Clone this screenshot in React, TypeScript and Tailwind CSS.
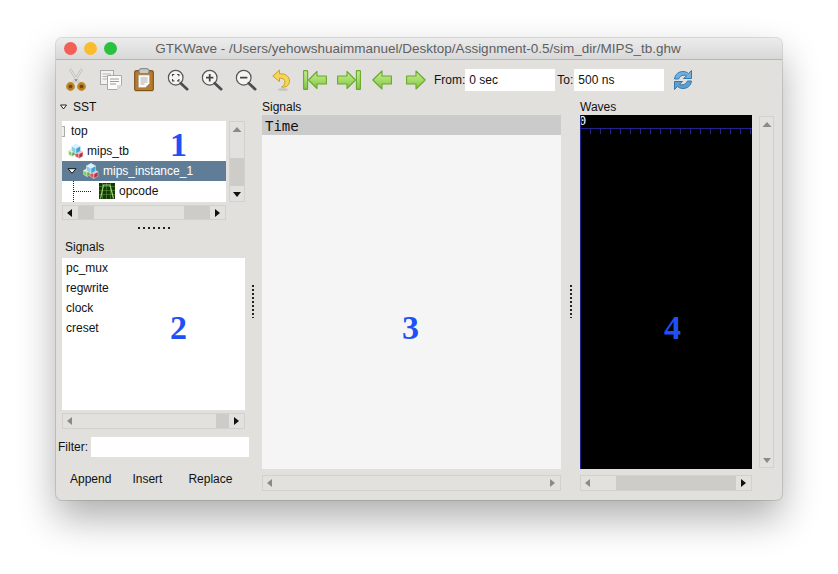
import type { ReactNode } from "react";

const FONT = "font-['Liberation_Sans',Arial,sans-serif]";
const DIGIT = "absolute font-['Liberation_Serif',serif] text-[34px] font-bold leading-[40px] text-[#1f50f5]";

function Arrow({ dir, dim }: { dir: "l" | "r" | "u" | "d"; dim?: boolean }) {
  const points = {
    l: "6,1 6,9 1,5",
    r: "2,1 2,9 7,5",
    u: "0.5,7 9.5,7 5,2",
    d: "1,3 9,3 5,8",
  }[dir];
  return (
    <svg width="10" height="10" viewBox="0 0 10 10">
      <polygon points={points} fill={dim ? "#8a8a88" : "#111"} />
    </svg>
  );
}

function ArrowCell({ dir, dim }: { dir: "l" | "r" | "u" | "d"; dim?: boolean }) {
  const horizontal = dir === "l" || dir === "r";
  return (
    <div className={`flex shrink-0 items-center justify-center ${horizontal ? "h-full w-[15px]" : "h-[15px] w-full"}`}>
      <Arrow dir={dir} dim={dim} />
    </div>
  );
}

function ScrollBar({ vertical, className, children }: { vertical?: boolean; className: string; children: ReactNode }) {
  return (
    <div className={`flex overflow-hidden border border-[#d2d1cd] bg-[#e2e1dd] ${vertical ? "flex-col" : ""} ${className}`}>
      {children}
    </div>
  );
}

function Gutter() {
  return <div className="flex-1 bg-[#cdccc8]" />;
}

function Cube({ x, y, r, top, left, right }: { x: number; y: number; r: number; top: string; left: string; right: string }) {
  const w = r * 0.87;
  const h = r / 2;
  return (
    <g stroke="#fff" strokeWidth=".4">
      <path d={`M${x} ${y}L${x + w} ${y - h}L${x} ${y - r}L${x - w} ${y - h}Z`} fill={top} />
      <path d={`M${x} ${y}L${x - w} ${y - h}V${y + h}L${x} ${y + r}Z`} fill={left} />
      <path d={`M${x} ${y}L${x + w} ${y - h}V${y + h}L${x} ${y + r}Z`} fill={right} />
    </g>
  );
}

function Blocks() {
  return (
    <svg width="16" height="16" viewBox="0 0 16 16">
      <Cube x={4} y={9.5} r={4} top="#d5efc0" left="#8cc866" right="#5fa83f" />
      <Cube x={11} y={11} r={4.500} top="#f3b4b4" left="#e2505a" right="#b9303c" />
      <Cube x={8} y={5.500} r={5.200} top="#d8f1fb" left="#86cfee" right="#3fa3d4" />
    </svg>
  );
}

function TreeRows() {
  return (
    <div className="relative h-[81px] w-[164px] shrink-0 overflow-hidden bg-white text-[12px] text-[#111]">
      <div className="flex h-[20px] items-center pl-[9px]">top</div>
      <div className="absolute left-0 top-[5px] h-[11px] w-[3px] rounded-r-[1px] border border-l-0 border-[#aaa] bg-[#eee]" />
      <div className="flex h-[20px] items-center pl-[6px]">
        <Blocks />
        <span className="ml-[3px]">mips_tb</span>
      </div>
      <div className="flex h-[20px] items-center bg-[#5f7d96] pl-[5px] text-white">
        <svg width="10" height="6" viewBox="0 0 10 6">
          <polygon points="1,0.7 9,0.7 5,5.300" fill="#fff" stroke="#111" strokeWidth="1" />
        </svg>
        <div className="ml-[6px] flex"><Blocks /></div>
        <span className="ml-[4px]">mips_instance_1</span>
      </div>
      <div className="flex h-[20px] items-center pl-[37px]">
        <svg width="16" height="16" viewBox="0 0 16 16">
          <rect width="16" height="16" fill="#1b3510" />
          <path d="M0 3.500H16M0 7.500H16M0 11.500H16M3.500 0V16M7.500 0V16M11.500 0V16" stroke="#4a8a30" strokeWidth=".7" />
          <path d="M1.500 15.500 4.500 2 11 2 14.500 15.500" fill="none" stroke="#a5d67a" strokeWidth="1.100" />
        </svg>
        <span className="ml-[4px]">opcode</span>
      </div>
      <div className="absolute left-[11px] top-[60px] h-[21px] border-l border-dotted border-[#222]" />
      <div className="absolute left-[12px] top-[70px] w-[17px] border-t border-dotted border-[#222]" />
      <span className={`${DIGIT} left-[108px] top-[4px]`}>1</span>
    </div>
  );
}

function Magnifier({ children }: { children?: ReactNode }) {
  return (
    <svg width="22" height="22" viewBox="0 0 24 24">
      <circle cx="9.500" cy="9.500" r="8" fill="#f4f4f2" stroke="#555" strokeWidth="1.300" />
      <path d="M15 15.500 22 22" stroke="#4d4d4d" strokeWidth="3" strokeLinecap="round" />
      {children}
    </svg>
  );
}

function GreenDefs() {
  return (
    <svg width="0" height="0" className="absolute">
      <defs>
        <linearGradient id="green" x1="0" y1="0" x2="0" y2="1">
          <stop offset="0" stopColor="#c6ea8e" />
          <stop offset=".5" stopColor="#a6dc6a" />
          <stop offset="1" stopColor="#7fc244" />
        </linearGradient>
      </defs>
    </svg>
  );
}

const greenProps = { fill: "url(#green)", stroke: "#69a82f", strokeWidth: 1.1, strokeLinejoin: "round" as const };

function ToolIcons() {
  return (
    <>
      <svg width="22" height="24" viewBox="0 0 22 24" className="ml-[9px]">
        <path d="M5 1 13.500 14.500M17 1 8.500 14.500" stroke="#bdbdb9" strokeWidth="2.400" />
        <path d="M5 1 13.500 14.500M17 1 8.500 14.500" stroke="#efefec" strokeWidth=".9" />
        <circle cx="11" cy="12" r="1" fill="#777" />
        <circle cx="5.500" cy="18.500" r="3.200" fill="#6a4a18" stroke="#c08426" strokeWidth="2.400" />
        <circle cx="16.500" cy="18.500" r="3.200" fill="#6a4a18" stroke="#c08426" strokeWidth="2.400" />
      </svg>
      <svg width="22" height="20" viewBox="0 0 22 20" className="ml-[13px]">
        <rect x=".5" y=".5" width="13" height="14" fill="#f2f2f0" stroke="#a9a9a6" />
        <path d="M2.500 4H11M2.500 6.500H11M2.500 9H11" stroke="#b5b5b3" />
        <path d="M7.500 5.500H21.500V15L17 19.500H7.500Z" fill="#fbfbfa" stroke="#a9a9a6" />
        <path d="M10 9H19M10 11.500H19M10 14H16" stroke="#9c9c9a" />
        <path d="M17 19.500V15H21.500Z" fill="#dcdcda" />
      </svg>
      <svg width="20" height="24" viewBox="0 0 20 24" className="ml-[12px]">
        <rect x=".7" y="2.700" width="18.600" height="20" rx="1" fill="#b87a2b" stroke="#6f4713" />
        <rect x="5" y=".7" width="10" height="5" rx="2" fill="#c9c9c6" stroke="#7c7c7a" />
        <path d="M4.500 7H15.500V15.500L11.500 19.500H4.500Z" fill="#fbfbf9" stroke="#aaa" strokeWidth=".7" />
        <path d="M6.500 10H13.500M6.500 12H13.500M6.500 14H13.500M6.500 16H10.500" stroke="#9a9a98" strokeWidth=".8" />
      </svg>
      <div className="ml-[13px] flex">
        <Magnifier>
          <path d="M6 8V6H8M11 6H13V8M13 11V13H11M8 13H6V11" fill="none" stroke="#444" strokeWidth="1.200" />
        </Magnifier>
      </div>
      <div className="ml-[12px] flex">
        <Magnifier>
          <path d="M5.500 9.500H13.500M9.500 5.500V13.500" stroke="#444" strokeWidth="1.900" />
        </Magnifier>
      </div>
      <div className="ml-[12px] flex">
        <Magnifier>
          <path d="M5.500 9.500H13.500" stroke="#444" strokeWidth="1.900" />
        </Magnifier>
      </div>
      <svg width="19" height="22" viewBox="0 0 19 22" className="ml-[15px]">
        <path d="M7.500 1 .8 7 7.500 12.500V9C11 9 13 10.500 13 13C13 15.500 11.500 17 9.500 18C14 19 17.500 16 17.500 12C17.500 7.500 13.500 4.500 7.500 4.800Z" fill="#f4d65a" stroke="#c9a222" strokeWidth="1" strokeLinejoin="round" />
        <ellipse cx="11" cy="20.500" rx="5" ry="1.300" fill="#c4c3bf" />
      </svg>
      <svg width="24" height="20" viewBox="0 0 24 20" className="ml-[12px]">
        <rect x=".6" y=".6" width="4" height="18.800" rx=".5" {...greenProps} />
        <path d="M5.500 10 14 1.500V6H23.400V14H14V18.500Z" {...greenProps} />
      </svg>
      <svg width="24" height="20" viewBox="0 0 24 20" className="ml-[10px]">
        <rect x="19.400" y=".6" width="4" height="18.800" rx=".5" {...greenProps} />
        <path d="M18.500 10 10 1.500V6H.6V14H10V18.500Z" {...greenProps} />
      </svg>
      <svg width="20" height="20" viewBox="0 0 20 20" className="ml-[11px]">
        <path d="M.8 10 10 1V6H19.400V14H10V19Z" {...greenProps} />
      </svg>
      <svg width="20" height="20" viewBox="0 0 20 20" className="ml-[14px]">
        <path d="M19.200 10 10 1V6H.6V14H10V19Z" {...greenProps} />
      </svg>
    </>
  );
}

function Refresh() {
  return (
    <svg width="20" height="22" viewBox="0 0 20 22" className="ml-[9px]">
      <path d="M1.500 10C2 5 6 2.500 10 2.500C12.500 2.500 14.500 3.500 15.500 4.500L18.500 1.500V9.500H10.500L13.500 6.800C12 5.800 8 5.300 5.500 10Z" fill="#6fb0de" stroke="#2f6ea5" strokeWidth=".9" strokeLinejoin="round" />
      <path d="M18.500 12C18 17 14 19.500 10 19.500C7.500 19.500 5.500 18.500 4.500 17.500L1.500 20.500V12.500H9.500L6.500 15.200C8 16.200 12 16.700 14.500 12Z" fill="#5e9fd2" stroke="#2f6ea5" strokeWidth=".9" strokeLinejoin="round" />
    </svg>
  );
}

export default function App() {
  return (
    <div className={`h-[574px] w-[838px] overflow-hidden bg-white pl-[56px] pt-[38px] ${FONT}`}>
      <GreenDefs />
      <div className="flex h-[462px] w-[726px] flex-col overflow-hidden rounded-[6px] bg-[#e1e0dd] text-[12px] text-[#111] shadow-[0_0_0_1px_rgba(0,0,0,0.12),0_18px_38px_rgba(0,0,0,0.32)]">
        <div className="relative flex h-[22px] shrink-0 items-center justify-center border-b border-[#b6b6b4] bg-gradient-to-b from-[#ececec] to-[#d8d8d8] pt-[1px] pr-[2px] text-[13.5px] text-[#5f5f5f]">
          <div className="absolute left-[8px] top-[4px] flex gap-[7px]">
            <div className="h-[13px] w-[13px] rounded-full bg-[#f25f58]" />
            <div className="h-[13px] w-[13px] rounded-full bg-[#f9bc2f]" />
            <div className="h-[13px] w-[13px] rounded-full bg-[#29c13f]" />
          </div>
          GTKWave - /Users/yehowshuaimmanuel/Desktop/Assignment-0.5/sim_dir/MIPS_tb.ghw
        </div>

        <div className="flex h-[38px] shrink-0 items-center pt-[2px]">
          <ToolIcons />
          <span className="ml-[8px]">From:</span>
          <div className="flex h-[22px] w-[90px] items-center bg-white pl-[4px]">0 sec</div>
          <span className="ml-[2px]">To:</span>
          <div className="ml-[1px] flex h-[22px] w-[90px] items-center bg-white pl-[4px]">500 ns</div>
          <Refresh />
        </div>

        <div className="flex min-h-0 flex-1">
          <div className="w-[194px] shrink-0 pl-[6px]">
            <div className="-ml-[2px] flex h-[23px] items-start gap-[6px] pt-[2px] leading-[14px]">
              <svg width="7" height="14" viewBox="0 0 7 14">
                <polygon points="0.5,5 6.500,5 3.500,9" fill="#fff" stroke="#111" strokeWidth=".9" />
              </svg>
              SST
            </div>
            <div className="flex h-[81px] gap-[3px]">
              <TreeRows />
              <ScrollBar vertical className="h-[81px] w-[16px]">
                <ArrowCell dir="u" dim />
                <div className="h-[21px] shrink-0" />
                <Gutter />
                <ArrowCell dir="d" />
              </ScrollBar>
            </div>
            <ScrollBar className="mt-[3px] h-[15px] w-[164px]">
              <ArrowCell dir="l" />
              <div className="w-[16px] bg-[#cdccc8]" />
              <div className="w-[90px]" />
              <Gutter />
              <ArrowCell dir="r" />
            </ScrollBar>
            <div className="flex h-[15px] items-center pl-[76px]">
              <div className="h-[2px] w-[33px] bg-[repeating-linear-gradient(90deg,#222_0_2px,transparent_2px_5px)]" />
            </div>
            <div className="flex h-[23px] items-center pl-[3px]">Signals</div>
            <div className="relative h-[152px] w-[183px] bg-white">
              {["pc_mux", "regwrite", "clock", "creset"].map((s) => (
                <div key={s} className="flex h-[20px] items-center pl-[4px]">{s}</div>
              ))}
              <span className={`${DIGIT} left-[108px] top-[50px]`}>2</span>
            </div>
            <ScrollBar className="mt-[3px] h-[16px] w-[183px]">
              <ArrowCell dir="l" dim />
              <div className="w-[138px]" />
              <Gutter />
              <ArrowCell dir="r" />
            </ScrollBar>
            <div className="-ml-[4px] mt-[8px] flex h-[20px] items-center">
              Filter:
              <div className="ml-[3px] h-[20px] w-[158px] bg-white" />
            </div>
            <div className="ml-[8px] mt-[10px] flex h-[24px] items-center">
              <span>Append</span>
              <span className="ml-[21px]">Insert</span>
              <span className="ml-[26px]">Replace</span>
            </div>
          </div>

          <div className="flex w-[12px] shrink-0 items-start pl-[2px] pt-[187px]">
            <div className="h-[33px] w-[2px] bg-[repeating-linear-gradient(180deg,#222_0_2px,transparent_2px_4px)]" />
          </div>

          <div className="w-[299px] shrink-0">
            <div className="flex h-[17px] items-center">Signals</div>
            <div className="relative flex h-[354px] flex-col bg-[#f5f5f5]">
              <div className="flex h-[20px] items-center bg-[#cbcbcb] pl-[3px] pt-[1px] font-['DejaVu_Sans_Mono',monospace] text-[14px] leading-none">Time</div>
              <span className={`${DIGIT} left-[140px] top-[193px]`}>3</span>
            </div>
            <ScrollBar className="mt-[6px] h-[16px] w-[299px]">
              <ArrowCell dir="l" dim />
              <div className="flex-1" />
              <ArrowCell dir="r" dim />
            </ScrollBar>
          </div>

          <div className="flex w-[19px] shrink-0 items-start pl-[9px] pt-[187px]">
            <div className="h-[33px] w-[2px] bg-[repeating-linear-gradient(180deg,#222_0_2px,transparent_2px_4px)]" />
          </div>

          <div className="w-[194px] shrink-0">
            <div className="flex h-[17px] items-center">Waves</div>
            <div className="flex h-[354px] gap-[7px]">
              <div className="relative h-[354px] w-[172px] overflow-hidden border-l border-[#23238c] bg-black">
                <span className="absolute -left-[2px] top-0 font-['DejaVu_Sans_Mono',monospace] text-[12px] leading-[13px] text-white">0</span>
                <svg width="172" height="8" viewBox="0 0 172 8" className="absolute left-0 top-[13px]">
                  <path d="M0 .5H172" stroke="#23238c" />
                  {Array.from({ length: 18 }, (_, i) => (
                    <path key={i} d={`M${i * 10 + 9.5} 0V6`} stroke="#23238c" />
                  ))}
                </svg>
                <span className={`${DIGIT} left-[83px] top-[193px]`}>4</span>
              </div>
              <ScrollBar vertical className="mt-[1px] h-[352px] w-[15px]">
                <ArrowCell dir="u" dim />
                <div className="flex-1" />
                <ArrowCell dir="d" dim />
              </ScrollBar>
            </div>
            <ScrollBar className="mt-[6px] h-[16px] w-[172px]">
              <ArrowCell dir="l" dim />
              <div className="w-[20px]" />
              <Gutter />
              <ArrowCell dir="r" />
            </ScrollBar>
          </div>
        </div>
      </div>
    </div>
  );
}
